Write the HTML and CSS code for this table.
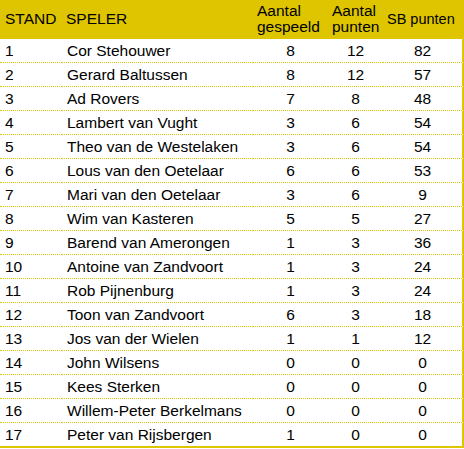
FILE: index.html
```html
<!DOCTYPE html>
<html lang="nl">
<head>
<meta charset="utf-8">
<title>Stand</title>
<link rel="stylesheet" href="styles.css">
</head>
<body>
<table class="standings">
  <colgroup>
    <col class="c-pos"><col class="c-name"><col class="c-played"><col class="c-points"><col class="c-sb">
  </colgroup>
  <thead>
    <tr>
      <th>STAND</th><th>SPELER</th><th>Aantal gespeeld</th><th>Aantal punten</th><th class="sb-head">SB punten</th>
    </tr>
  </thead>
  <tbody>
    <tr><td>1</td><td>Cor Stehouwer</td><td class="num">8</td><td class="num">12</td><td class="num">82</td></tr>
    <tr><td>2</td><td>Gerard Baltussen</td><td class="num">8</td><td class="num">12</td><td class="num">57</td></tr>
    <tr><td>3</td><td>Ad Rovers</td><td class="num">7</td><td class="num">8</td><td class="num">48</td></tr>
    <tr><td>4</td><td>Lambert van Vught</td><td class="num">3</td><td class="num">6</td><td class="num">54</td></tr>
    <tr><td>5</td><td>Theo van de Westelaken</td><td class="num">3</td><td class="num">6</td><td class="num">54</td></tr>
    <tr><td>6</td><td>Lous van den Oetelaar</td><td class="num">6</td><td class="num">6</td><td class="num">53</td></tr>
    <tr><td>7</td><td>Mari van den Oetelaar</td><td class="num">3</td><td class="num">6</td><td class="num">9</td></tr>
    <tr><td>8</td><td>Wim van Kasteren</td><td class="num">5</td><td class="num">5</td><td class="num">27</td></tr>
    <tr><td>9</td><td>Barend van Amerongen</td><td class="num">1</td><td class="num">3</td><td class="num">36</td></tr>
    <tr><td>10</td><td>Antoine van Zandvoort</td><td class="num">1</td><td class="num">3</td><td class="num">24</td></tr>
    <tr><td>11</td><td>Rob Pijnenburg</td><td class="num">1</td><td class="num">3</td><td class="num">24</td></tr>
    <tr><td>12</td><td>Toon van Zandvoort</td><td class="num">6</td><td class="num">3</td><td class="num">18</td></tr>
    <tr><td>13</td><td>Jos van der Wielen</td><td class="num">1</td><td class="num">1</td><td class="num">12</td></tr>
    <tr><td>14</td><td>John Wilsens</td><td class="num">0</td><td class="num">0</td><td class="num">0</td></tr>
    <tr><td>15</td><td>Kees Sterken</td><td class="num">0</td><td class="num">0</td><td class="num">0</td></tr>
    <tr><td>16</td><td>Willem-Peter Berkelmans</td><td class="num">0</td><td class="num">0</td><td class="num">0</td></tr>
    <tr><td>17</td><td>Peter van Rijsbergen</td><td class="num">1</td><td class="num">0</td><td class="num">0</td></tr>
  </tbody>
</table>
</body>
</html>
```
FILE: styles.css
```css
html, body {
  margin: 0;
  padding: 0;
  background: #ffffff;
}

.standings {
  width: 464px;
  table-layout: fixed;
  border-collapse: separate;
  border-spacing: 0;
  font-family: "Liberation Sans", Arial, sans-serif;
  font-size: 15.5px;
  color: #000000;
}

.c-pos { width: 62px; }
.c-name { width: 191px; }
.c-played { width: 75px; }
.c-points { width: 55px; }
.c-sb { width: 81px; }

.standings th {
  background: #dfc400;
  font-weight: normal;
  font-size: 15.5px;
  line-height: 16px;
  text-align: left;
  vertical-align: middle;
  height: 39px;
  padding: 0 0 0 4px;
  border-bottom: 1px dotted #dfc400;
  box-sizing: border-box;
  white-space: normal;
}

.standings th:first-child {
  padding-left: 5px;
}

.standings th.sb-head {
  white-space: nowrap;
  font-size: 14.5px;
}

.standings td {
  height: 24px;
  box-sizing: border-box;
  padding: 0 0 0 5px;
  border-bottom: 1px dotted #dfc400;
  vertical-align: middle;
  line-height: 16px;
  white-space: nowrap;
  overflow: hidden;
}

.standings td.num {
  text-align: center;
  padding: 0;
}

.standings tr > :last-child {
  border-right: 2px solid #dfc400;
}

.standings tbody tr:last-child td {
  border-bottom: 2px solid #dfc400;
  height: 25px;
}
```
